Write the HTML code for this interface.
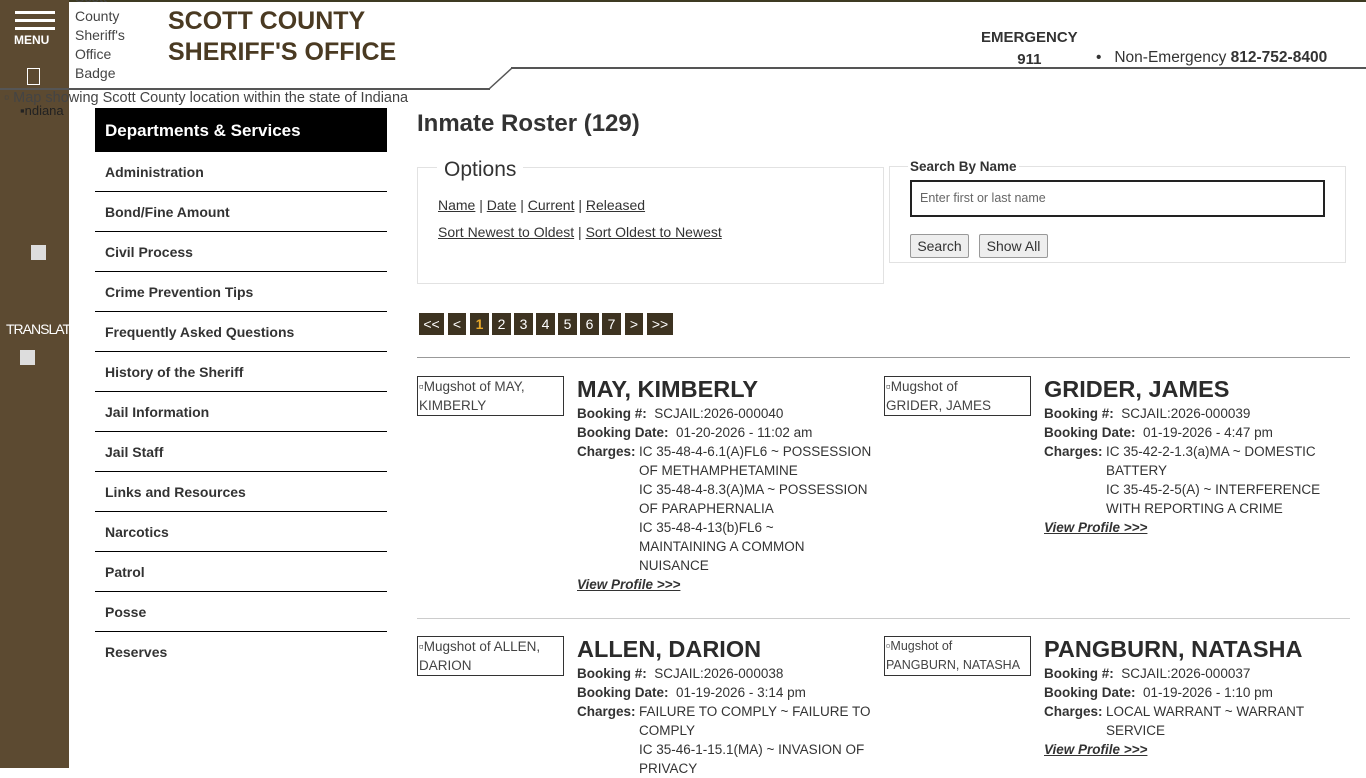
<!DOCTYPE html>
<html><head><meta charset="utf-8"><style>
*{margin:0;padding:0;box-sizing:border-box}
body{width:1366px;height:768px;overflow:hidden;background:#fff;font-family:"Liberation Sans",sans-serif;color:#333;position:relative}
.a{position:absolute}
.side{left:0;top:0;width:69px;height:768px;background:#5c4a31}
.menu{left:0;top:0;width:69px;height:90px;background:#5c4a31}
.bar{left:15px;width:40px;height:3px;background:#fff}
.nav{left:95px;width:292px}
.nav div{height:40px;border-bottom:1px solid #000;font-size:14px;font-weight:bold;color:#333;padding:12px 10px 0}
u{text-decoration:underline}
.pg{top:313px;height:22px;background:#3d3321;color:#fff;font-size:14px;text-align:center;line-height:22px}
.img{border:1px solid #333;font-size:13.5px;color:#444;line-height:19px;width:147px;height:40px;overflow:hidden;padding-left:1px}
.nm{font-size:23.5px;font-weight:bold;color:#2b2b2b}
.inf{font-size:13.5px;line-height:19px;color:#333}
.ch{padding-left:62px;position:relative}
.ch b{position:absolute;left:0}
.vp{font-weight:bold;font-style:italic;text-decoration:underline;color:#333}
</style></head><body>
<div class="a side"></div>
<div class="a menu"></div>
<div class="a bar" style="top:11px"></div><div class="a bar" style="top:19px"></div><div class="a bar" style="top:27px"></div>
<div class="a" style="left:14px;top:33px;color:#fff;font-size:12px;font-weight:bold">MENU</div>
<div class="a" style="left:27px;top:68px;width:13px;height:17px;border:1px solid #fff"></div>
<div class="a" style="left:69px;top:0;width:1297px;height:2px;background:#3d3a22"></div>
<div class="a" style="left:0;top:88px;width:490px;height:2px;background:#555"></div>
<svg class="a" style="left:488px;top:66px" width="30" height="25"><line x1="1" y1="23" x2="24" y2="2" stroke="#555" stroke-width="1.5"/></svg>
<div class="a" style="left:511px;top:67px;width:855px;height:2px;background:#555"></div>
<div class="a" style="left:75px;top:-12px;font-size:14px;line-height:19px;color:#444">Scott<br>County<br>Sheriff's<br>Office<br>Badge</div>
<div class="a" style="left:168px;top:6px;font-size:25px;line-height:31px;font-weight:bold;color:#4a3a22">SCOTT COUNTY<br>SHERIFF'S OFFICE</div>
<div class="a" style="left:981px;top:27px;font-size:15px;font-weight:bold;color:#333;text-align:center;line-height:22px">EMERGENCY<br>911</div>
<div class="a" style="left:1096px;top:49px;font-size:15.5px;color:#333">•&nbsp;&nbsp;&nbsp;Non-Emergency <b>812-752-8400</b></div>
<div class="a" style="left:4px;top:90px;font-size:14.5px;color:#444">▫ Map showing Scott County location within the state of Indiana</div>
<div class="a" style="left:20px;top:103px;font-size:13px;color:#222">▪ndiana</div>
<div class="a" style="left:6px;top:321px;font-size:14px;color:#fff;letter-spacing:-1px">TRANSLATE</div>
<div class="a" style="left:31px;top:245px;width:15px;height:15px;background:#ddd"></div>
<div class="a" style="left:20px;top:350px;width:15px;height:15px;background:#ddd"></div>
<div class="a" style="left:95px;top:108px;width:292px;height:44px;background:#000;color:#fff;font-size:17px;font-weight:bold;padding:13px 10px 0">Departments &amp; Services</div>
<div class="a nav" style="top:152px">
<div>Administration</div><div>Bond/Fine Amount</div><div>Civil Process</div><div>Crime Prevention Tips</div><div>Frequently Asked Questions</div><div>History of the Sheriff</div><div>Jail Information</div><div>Jail Staff</div><div>Links and Resources</div><div>Narcotics</div><div>Patrol</div><div>Posse</div><div style="border:none">Reserves</div>
</div>
<div class="a" style="left:417px;top:110px;font-size:24px;font-weight:bold;color:#333">Inmate Roster (129)</div>
<div class="a" style="left:417px;top:167px;width:467px;height:117px;border:1px solid #e2e2e2"></div>
<div class="a" style="left:437px;top:158px;background:#fff;padding:0 7px;font-size:21px;color:#333">Options</div>
<div class="a" style="left:438px;top:197px;font-size:14px;color:#333"><u>Name</u> | <u>Date</u> | <u>Current</u> | <u>Released</u></div>
<div class="a" style="left:438px;top:224px;font-size:14px;color:#333"><u>Sort Newest to Oldest</u> | <u>Sort Oldest to Newest</u></div>
<div class="a" style="left:889px;top:166px;width:457px;height:97px;border:1px solid #e2e2e2"></div>
<div class="a" style="left:908px;top:159px;background:#fff;padding:0 2px;font-size:13.5px;font-weight:bold;color:#333">Search By Name</div>
<div class="a" style="left:910px;top:180px;width:415px;height:37px;border:2px solid #222;font-size:12.5px;color:#666;padding:9px 8px">Enter first or last name</div>
<div class="a" style="left:910px;top:234px;width:59px;height:24px;border:1px solid #999;background:#eee;font-size:14px;text-align:center;line-height:22px;border-radius:2px">Search</div>
<div class="a" style="left:979px;top:234px;width:69px;height:24px;border:1px solid #999;background:#eee;font-size:14px;text-align:center;line-height:22px;border-radius:2px">Show All</div>
<div class="a pg" style="left:419px;width:25px">&lt;&lt;</div>
<div class="a pg" style="left:448px;width:18px">&lt;</div>
<div class="a pg" style="left:470px;width:19px;color:#e8a92a;font-weight:bold">1</div>
<div class="a pg" style="left:492px;width:19px">2</div>
<div class="a pg" style="left:514px;width:19px">3</div>
<div class="a pg" style="left:536px;width:19px">4</div>
<div class="a pg" style="left:558px;width:19px">5</div>
<div class="a pg" style="left:580px;width:19px">6</div>
<div class="a pg" style="left:602px;width:19px">7</div>
<div class="a pg" style="left:625px;width:18px">&gt;</div>
<div class="a pg" style="left:647px;width:26px">&gt;&gt;</div>
<div class="a" style="left:417px;top:357px;width:933px;height:1px;background:#999"></div>
<div class="a" style="left:417px;top:618px;width:933px;height:1px;background:#ccc"></div>

<div class="a img" style="left:417px;top:376px">▫Mugshot of MAY, KIMBERLY</div>
<div class="a nm" style="left:577px;top:376px">MAY, KIMBERLY</div>
<div class="a inf" style="left:577px;top:404px;width:300px">
<div><b>Booking #:</b>&nbsp; SCJAIL:2026-000040</div>
<div><b>Booking Date:</b>&nbsp; 01-20-2026 - 11:02 am</div>
<div class="ch"><b>Charges:</b>IC 35-48-4-6.1(A)FL6 ~ POSSESSION<br>OF METHAMPHETAMINE<br>IC 35-48-4-8.3(A)MA ~ POSSESSION<br>OF PARAPHERNALIA<br>IC 35-48-4-13(b)FL6 ~<br>MAINTAINING A COMMON<br>NUISANCE</div>
<div class="vp">View Profile &gt;&gt;&gt;</div></div>

<div class="a img" style="left:884px;top:376px">▫Mugshot of<br>GRIDER, JAMES</div>
<div class="a nm" style="left:1044px;top:376px">GRIDER, JAMES</div>
<div class="a inf" style="left:1044px;top:404px;width:300px">
<div><b>Booking #:</b>&nbsp; SCJAIL:2026-000039</div>
<div><b>Booking Date:</b>&nbsp; 01-19-2026 - 4:47 pm</div>
<div class="ch"><b>Charges:</b>IC 35-42-2-1.3(a)MA ~ DOMESTIC<br>BATTERY<br>IC 35-45-2-5(A) ~ INTERFERENCE<br>WITH REPORTING A CRIME</div>
<div class="vp">View Profile &gt;&gt;&gt;</div></div>

<div class="a img" style="left:417px;top:636px">▫Mugshot of ALLEN, DARION</div>
<div class="a nm" style="left:577px;top:636px">ALLEN, DARION</div>
<div class="a inf" style="left:577px;top:664px;width:300px">
<div><b>Booking #:</b>&nbsp; SCJAIL:2026-000038</div>
<div><b>Booking Date:</b>&nbsp; 01-19-2026 - 3:14 pm</div>
<div class="ch"><b>Charges:</b>FAILURE TO COMPLY ~ FAILURE TO<br>COMPLY<br>IC 35-46-1-15.1(MA) ~ INVASION OF<br>PRIVACY</div></div>

<div class="a img" style="left:884px;top:636px;font-size:12.5px;white-space:nowrap">▫Mugshot of<br>PANGBURN, NATASHA</div>
<div class="a nm" style="left:1044px;top:636px">PANGBURN, NATASHA</div>
<div class="a inf" style="left:1044px;top:664px;width:300px">
<div><b>Booking #:</b>&nbsp; SCJAIL:2026-000037</div>
<div><b>Booking Date:</b>&nbsp; 01-19-2026 - 1:10 pm</div>
<div class="ch"><b>Charges:</b>LOCAL WARRANT ~ WARRANT<br>SERVICE</div>
<div class="vp">View Profile &gt;&gt;&gt;</div></div>
</body></html>
